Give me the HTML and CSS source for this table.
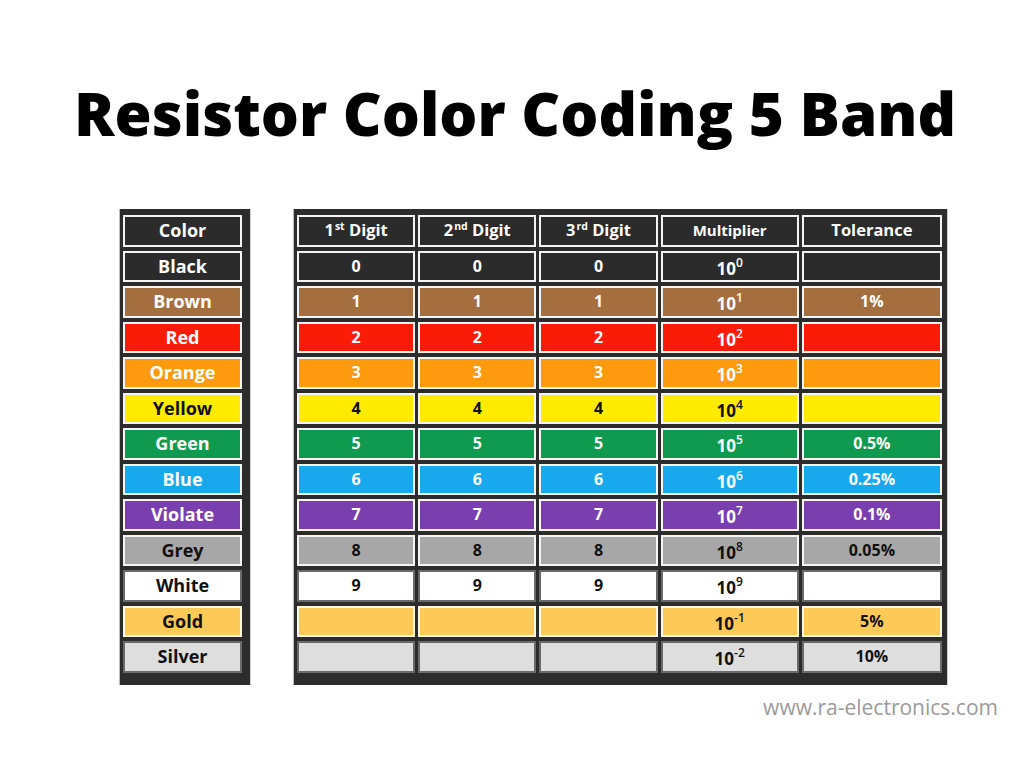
FILE: index.html
```html
<!DOCTYPE html>
<html lang="en">
<head>
<meta charset="utf-8">
<title>Resistor Color Coding 5 Band</title>
<link rel="stylesheet" href="styles.css">
</head>
<body>
<main class="page">
  <h1 class="title">Resistor Color Coding 5 Band</h1>
  <div class="chart">
    <div class="panel names">
      <div class="cell head">Color</div>
      <div class="cell black">Black</div>
      <div class="cell brown">Brown</div>
      <div class="cell red">Red</div>
      <div class="cell orange">Orange</div>
      <div class="cell yellow">Yellow</div>
      <div class="cell green">Green</div>
      <div class="cell blue">Blue</div>
      <div class="cell violet">Violate</div>
      <div class="cell grey">Grey</div>
      <div class="cell white">White</div>
      <div class="cell gold">Gold</div>
      <div class="cell silver">Silver</div>
    </div>
    <div class="panel values">
      <div class="cell head">1<sup>st</sup> Digit</div>
      <div class="cell head">2<sup>nd</sup> Digit</div>
      <div class="cell head">3<sup>rd</sup> Digit</div>
      <div class="cell head small">Multiplier</div>
      <div class="cell head">Tolerance</div>

      <div class="cell black">0</div><div class="cell black">0</div><div class="cell black">0</div><div class="cell black mult">10<sup class="exp">0</sup></div><div class="cell black"></div>
      <div class="cell brown">1</div><div class="cell brown">1</div><div class="cell brown">1</div><div class="cell brown mult">10<sup class="exp">1</sup></div><div class="cell brown">1%</div>
      <div class="cell red">2</div><div class="cell red">2</div><div class="cell red">2</div><div class="cell red mult">10<sup class="exp">2</sup></div><div class="cell red"></div>
      <div class="cell orange">3</div><div class="cell orange">3</div><div class="cell orange">3</div><div class="cell orange mult">10<sup class="exp">3</sup></div><div class="cell orange"></div>
      <div class="cell yellow">4</div><div class="cell yellow">4</div><div class="cell yellow">4</div><div class="cell yellow mult">10<sup class="exp">4</sup></div><div class="cell yellow"></div>
      <div class="cell green">5</div><div class="cell green">5</div><div class="cell green">5</div><div class="cell green mult">10<sup class="exp">5</sup></div><div class="cell green">0.5%</div>
      <div class="cell blue">6</div><div class="cell blue">6</div><div class="cell blue">6</div><div class="cell blue mult">10<sup class="exp">6</sup></div><div class="cell blue">0.25%</div>
      <div class="cell violet">7</div><div class="cell violet">7</div><div class="cell violet">7</div><div class="cell violet mult">10<sup class="exp">7</sup></div><div class="cell violet">0.1%</div>
      <div class="cell grey">8</div><div class="cell grey">8</div><div class="cell grey">8</div><div class="cell grey mult">10<sup class="exp">8</sup></div><div class="cell grey">0.05%</div>
      <div class="cell white">9</div><div class="cell white">9</div><div class="cell white">9</div><div class="cell white mult">10<sup class="exp">9</sup></div><div class="cell white"></div>
      <div class="cell gold"></div><div class="cell gold"></div><div class="cell gold"></div><div class="cell gold mult">10<sup class="exp">-1</sup></div><div class="cell gold">5%</div>
      <div class="cell silver"></div><div class="cell silver"></div><div class="cell silver"></div><div class="cell silver mult">10<sup class="exp">-2</sup></div><div class="cell silver">10%</div>
    </div>
  </div>
  <p class="credit">www.ra-electronics.com</p>
</main>
</body>
</html>
```

FILE: styles.css
```css
html, body {
  margin: 0;
  padding: 0;
  background: #ffffff;
}

.page {
  width: 1024px;
  height: 768px;
  font-family: "Open Sans", "Liberation Sans", sans-serif;
  overflow: hidden;
}

.title {
  margin: 83px 0 0 0;
  font-size: 60px;
  line-height: 60px;
  font-weight: 800;
  color: #000;
  text-align: center;
  padding-left: 6px;
}

.chart {
  display: flex;
  gap: 44px;
  margin-top: 66px;
  padding-left: 120px;
}

.panel {
  background: #2c2c2c;
  height: 476px;
  box-sizing: border-box;
  display: grid;
  grid-template-rows: repeat(13, minmax(0, 1fr));
  row-gap: 4px;
  padding: 6px 5px 12px 3px;
  box-shadow: -1px 0 0 #bdbdbd, 1px 0 0 #cfcfcf;
}

.names {
  width: 130px;
  padding-right: 8px;
}

.values {
  width: 653px;
  grid-template-columns: 118fr 118fr 118fr 138fr 140fr;
  column-gap: 3px;
}

.cell {
  box-sizing: border-box;
  border: 2px solid #f5f5f5;
  display: block;
  overflow: hidden;
  text-align: center;
  font-weight: 700;
  font-size: 16px;
  line-height: 26px;
  white-space: nowrap;
  color: #fff;
}

.names .cell {
  font-size: 18px;
}

.values .head {
  font-size: 16.5px;
}

.values .head.small {
  font-size: 15px;
}

.values .mult {
  font-size: 17px;
  line-height: 26px;
  padding-top: 3px;
}

.head { background: #2b2b2b; color: #fff; }

sup {
  font-size: 10.5px;
  line-height: 0;
  vertical-align: 6px;
  margin-left: 1px;
}

.exp {
  font-size: 12px;
  font-weight: 600;
  vertical-align: 8px;
  margin-left: 0;
}

.black  { background: #2b2b2b; color: #fff; }
.brown  { background: #a56e3e; color: #fff; }
.red    { background: #fa1c07; color: #fff; }
.orange { background: #fd9a0d; color: #fff; }
.yellow { background: #ffeb00; color: #111; }
.green  { background: #0f9a4f; color: #fff; }
.blue   { background: #18a8ee; color: #fff; }
.violet { background: #7a3fae; color: #fff; }
.grey   { background: #a7a7a7; color: #111; }
.white  { background: #ffffff; color: #111; border-color: #6a6a6a; }
.gold   { background: #fdca57; color: #111; border-color: #fff8e0; }
.silver { background: #dedede; color: #111; border-color: #6a6a6a; }

.credit {
  margin: 12px 26px 0 0;
  text-align: right;
  font-size: 21px;
  line-height: 21px;
  color: #9a9a9a;
  font-weight: 400;
}
```
